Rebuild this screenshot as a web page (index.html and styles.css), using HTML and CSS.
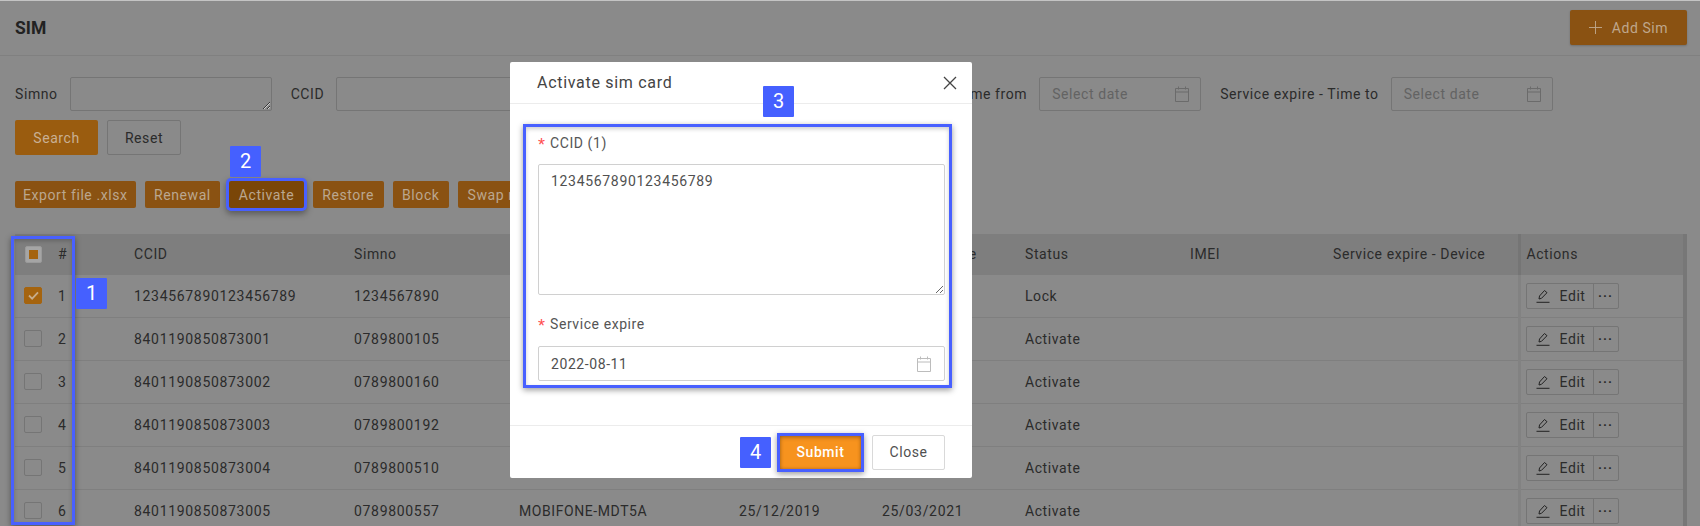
FILE: index.html
```html
<!DOCTYPE html>
<html lang="en">
<head>
<meta charset="utf-8">
<title>SIM</title>
<link rel="stylesheet" href="styles.css">
</head>
<body>
<div class="page">
  <header class="topbar">
    <h1 class="title">SIM</h1>
    <button class="btn btn-add"><svg class="ico-plus" viewBox="0 0 14 14"><path d="M7 0v14M0 7h14"/></svg>Add Sim</button>
  </header>

  <section class="filters">
    <div class="filter-row">
      <label class="f-label">Simno</label>
      <textarea class="f-area"></textarea>
      <label class="f-label f-next">CCID</label>
      <textarea class="f-area"></textarea>
      <span class="f-spacer"></span>
      <label class="f-label">Service expire - Time from</label>
      <div class="f-date"><span>Select date</span><svg class="ico-cal" viewBox="0 0 14 16"><path d="M.5 2.5h13v13H.5zM.5 6h13M3.5.5v3M10.500 .5v3"/></svg></div>
      <label class="f-label f-next">Service expire - Time to</label>
      <div class="f-date"><span>Select date</span><svg class="ico-cal" viewBox="0 0 14 16"><path d="M.5 2.5h13v13H.5zM.5 6h13M3.5.5v3M10.500 .5v3"/></svg></div>
    </div>
    <div class="search-row">
      <button class="btn btn-search">Search</button>
      <button class="btn btn-reset">Reset</button>
    </div>
  </section>

  <div class="toolbar">
    <button class="btn btn-act">Export file .xlsx</button>
    <button class="btn btn-act">Renewal</button>
    <button class="btn btn-act btn-focus">Activate</button>
    <button class="btn btn-act">Restore</button>
    <button class="btn btn-act">Block</button>
    <button class="btn btn-act">Swap number</button>
  </div>

  <div class="table-wrap">
    <table class="grid">
      <colgroup>
        <col class="c1"><col class="c2"><col class="c3"><col class="c4"><col class="c5"><col class="c6"><col class="c7"><col class="c8"><col class="c9"><col class="c10"><col class="c11">
      </colgroup>
      <thead>
        <tr>
          <th><span class="cb cb-some"><i></i></span></th><th>#</th><th>CCID</th><th>Simno</th><th>Package</th><th>Active date</th><th>Service expire</th><th>Status</th><th>IMEI</th><th>Service expire - Device</th><th class="act">Actions</th>
        </tr>
      </thead>
      <tbody>
        <tr>
          <td><span class="cb cb-on"><svg viewBox="0 0 12 10"><path d="M1 5l3.500 3.500L11 1.500"/></svg></span></td><td>1</td><td>1234567890123456789</td><td>1234567890</td><td></td><td></td><td></td><td>Lock</td><td></td><td></td>
          <td class="act"><div class="edit"><span class="edit-main"><svg class="ico-pen" viewBox="0 0 14 14"><path d="M3 10l.5-3L8.500 1.500l2.500 2.200-5.500 5.600zM.5 13.300h13"/></svg>Edit</span><span class="edit-more">···</span></div></td>
        </tr>
        <tr>
          <td><span class="cb"></span></td><td>2</td><td>8401190850873001</td><td>0789800105</td><td></td><td></td><td></td><td>Activate</td><td></td><td></td>
          <td class="act"><div class="edit"><span class="edit-main"><svg class="ico-pen" viewBox="0 0 14 14"><path d="M3 10l.5-3L8.500 1.500l2.500 2.200-5.500 5.600zM.5 13.300h13"/></svg>Edit</span><span class="edit-more">···</span></div></td>
        </tr>
        <tr>
          <td><span class="cb"></span></td><td>3</td><td>8401190850873002</td><td>0789800160</td><td></td><td></td><td></td><td>Activate</td><td></td><td></td>
          <td class="act"><div class="edit"><span class="edit-main"><svg class="ico-pen" viewBox="0 0 14 14"><path d="M3 10l.5-3L8.500 1.500l2.500 2.200-5.500 5.600zM.5 13.300h13"/></svg>Edit</span><span class="edit-more">···</span></div></td>
        </tr>
        <tr>
          <td><span class="cb"></span></td><td>4</td><td>8401190850873003</td><td>0789800192</td><td></td><td></td><td></td><td>Activate</td><td></td><td></td>
          <td class="act"><div class="edit"><span class="edit-main"><svg class="ico-pen" viewBox="0 0 14 14"><path d="M3 10l.5-3L8.500 1.500l2.500 2.200-5.500 5.600zM.5 13.300h13"/></svg>Edit</span><span class="edit-more">···</span></div></td>
        </tr>
        <tr>
          <td><span class="cb"></span></td><td>5</td><td>8401190850873004</td><td>0789800510</td><td></td><td></td><td></td><td>Activate</td><td></td><td></td>
          <td class="act"><div class="edit"><span class="edit-main"><svg class="ico-pen" viewBox="0 0 14 14"><path d="M3 10l.5-3L8.500 1.500l2.500 2.200-5.500 5.600zM.5 13.300h13"/></svg>Edit</span><span class="edit-more">···</span></div></td>
        </tr>
        <tr>
          <td><span class="cb"></span></td><td>6</td><td>8401190850873005</td><td>0789800557</td><td>MOBIFONE-MDT5A</td><td>25/12/2019</td><td>25/03/2021</td><td>Activate</td><td></td><td></td>
          <td class="act"><div class="edit"><span class="edit-main"><svg class="ico-pen" viewBox="0 0 14 14"><path d="M3 10l.5-3L8.500 1.500l2.500 2.200-5.500 5.600zM.5 13.300h13"/></svg>Edit</span><span class="edit-more">···</span></div></td>
        </tr>
      </tbody>
    </table>
  </div>

  <div class="modal">
    <div class="modal-head">
      <span class="modal-title">Activate sim card</span>
      <svg class="ico-x" viewBox="0 0 14 14"><path d="M1 1l12 12M13 1L1 13"/></svg>
    </div>
    <div class="modal-body">
      <label class="m-label"><span class="req">*</span>CCID (1)</label>
      <textarea class="m-area">1234567890123456789</textarea>
      <label class="m-label m-label-2"><span class="req">*</span>Service expire</label>
      <div class="m-date"><span>2022-08-11</span><svg class="ico-cal ico-cal-m" viewBox="0 0 14 16"><path d="M.5 2.500h13v13H.5zM.5 6h13M3.500 .5v3M10.500 .5v3"/></svg></div>
    </div>
    <div class="modal-foot">
      <button class="btn btn-submit">Submit</button>
      <button class="btn btn-close">Close</button>
    </div>
  </div>

  <div class="frame frame-1"></div>
  <div class="frame frame-3"></div>
  <div class="frame frame-4"></div>
  <div class="badge badge-1">1</div>
  <div class="badge badge-2">2</div>
  <div class="badge badge-3">3</div>
  <div class="badge badge-4">4</div>
</div>
</body>
</html>
```

FILE: styles.css
```css
* { box-sizing: border-box; }
html, body { margin: 0; padding: 0; }
body { font-family: Roboto, "Liberation Sans", sans-serif; font-size: 14px; letter-spacing: .58px; color: #2b2b2b; background: #8a8a8a; }
.page { position: relative; width: 1700px; height: 526px; overflow: hidden; background: #8a8a8a; border-top: 1px solid #c4c4c4; }

.topbar { display: flex; align-items: center; justify-content: space-between; height: 55px; padding: 0 13px 0 15px; border-bottom: 1px solid #808080; }
.title { margin: 0; font-size: 17.500px; font-weight: 700; letter-spacing: 0; color: #222; }

.btn { display: inline-flex; align-items: center; justify-content: center; font-family: inherit; font-size: 14px; letter-spacing: inherit; border: 0; border-radius: 2px; padding: 0; cursor: pointer; }
.btn-add { width: 117px; height: 35px; margin-top: -1px; background: #8a5212; color: #bfa78c; box-shadow: 0 1px 2px rgba(0,0,0,.2); }
.ico-plus { width: 13px; height: 13px; margin-right: 10px; fill: none; stroke: #bfa78c; stroke-width: 1; }

.filters { padding: 21px 0 0 15px; }
.filter-row { display: flex; align-items: center; height: 34px; }
.f-label { margin-right: 12px; color: #2b2b2b; white-space: nowrap; }
.f-next { margin-left: 19px; }
.f-area { width: 202px; height: 34px; min-height: 34px; background: transparent; border: 1px solid #757575; border-radius: 2px; margin: 0; outline: 0; }
.f-spacer { flex: 0 0 312px; }
.f-date { display: flex; align-items: center; justify-content: space-between; width: 162px; height: 34px; padding: 0 11px 0 12px; border: 1px solid #757575; border-radius: 2px; color: #636363; }
.ico-cal { width: 14px; height: 16px; fill: none; stroke: #6b6b6b; stroke-width: 1; }

.search-row { display: flex; gap: 9px; margin-top: 9px; }
.btn-search { width: 83px; height: 35px; background: #9a5c0f; color: #c9b094; }
.btn-reset { width: 74px; height: 35px; background: transparent; border: 1px solid #757575; color: #2b2b2b; }

.toolbar { display: flex; gap: 9px; padding: 26px 0 0 15px; }
.btn-act { height: 27px; padding: 0 9.500px; background: #8a5212; color: #bba78f; white-space: nowrap; }
.btn-act:first-child { padding: 0 8px; }
.btn-focus { box-shadow: 0 0 0 3px #4860ff, 0 3px 6px 3px rgba(0,0,0,.35); background: #7a4608; }

.table-wrap { margin: 26px 13px 0 15px; border-right: 4px solid #777; }
.grid { width: 100%; table-layout: fixed; border-collapse: collapse; }
.c1 { width: 34px; } .c2 { width: 76px; } .c3 { width: 220px; } .c4 { width: 165px; } .c5 { width: 220px; } .c6 { width: 143px; } .c7 { width: 143px; } .c8 { width: 165px; } .c9 { width: 143px; } .c10 { width: 195px; } .c11 { width: 164px; }
.grid th { height: 41px; padding: 0 9px 2px; background: #7e7e7e; font-weight: 400; text-align: left; color: #2b2b2b; }
.grid td { height: 43px; padding: 0 9px; border-bottom: 1px solid #7f7f7f; color: #2b2b2b; white-space: nowrap; }
.grid tbody tr:first-child td { height: 42px; }
.grid td:nth-child(3), .grid td:nth-child(4), .grid td:nth-child(6), .grid td:nth-child(7) { letter-spacing: .68px; }
.grid .act { border-left: 3px solid #757575; padding-left: 6px; }
.grid td.act { border-left-color: #828282; padding-left: 5px; }

.cb { display: block; width: 18px; height: 17px; border: 1px solid #757575; border-radius: 2px; }
.grid th .cb { display: flex; align-items: center; justify-content: center; margin: 2px 0 0 1px; width: 17px; background: #a5a5a5; border-color: #9a9a9a; }
.cb-some i { display: block; width: 9px; height: 9px; background: #a5640f; }
.cb-on { display: flex; align-items: center; justify-content: center; background: #a5640f; border-color: #a5640f; }
.cb-on svg { width: 11px; height: 9px; fill: none; stroke: #c7ad8c; stroke-width: 2; }

.edit { display: flex; width: 93px; height: 26px; border: 1px solid #757575; border-radius: 2px; }
.edit-main { display: flex; align-items: center; width: 67px; padding-left: 9px; border-right: 1px solid #757575; }
.edit-more { flex: 1; text-align: center; line-height: 24px; font-weight: 700; font-size: 13px; letter-spacing: 1px; }
.ico-pen { width: 14px; height: 14px; margin-right: 10px; fill: none; stroke: #222; stroke-width: 1; }

.modal { position: absolute; left: 510px; top: 61px; width: 462px; height: 416px; display: flex; flex-direction: column; background: #fff; border-radius: 2px; color: #505050; }
.modal-head { display: flex; align-items: center; justify-content: space-between; height: 42px; padding: 0 15px 0 27px; border-bottom: 1px solid #ececec; }
.modal-title { font-size: 16px; letter-spacing: .7px; color: #444; }
.ico-x { width: 14px; height: 14px; fill: none; stroke: #444; stroke-width: 1.300; }
.modal-body { flex: 1; padding: 30px 27px 0 28px; }
.m-label { display: flex; align-items: center; height: 18px; line-height: 18px; color: #555; }
.req { display: inline-block; width: 12px; height: 18px; line-height: 23px; font-size: 18px; color: #ff4d4f; font-family: "Liberation Sans", sans-serif; letter-spacing: 0; }
.m-area { display: block; width: 100%; height: 131px; margin: 12px 0 0; padding: 5px 12px; border: 1px solid #d0d0d0; border-radius: 2px; font-family: inherit; font-size: 14px; letter-spacing: .68px; line-height: 22px; color: #505050; outline: 0; }
.m-label-2 { margin-top: 20px; }
.m-date { display: flex; align-items: center; justify-content: space-between; height: 35px; margin-top: 13px; padding: 0 13px 0 12px; border: 1px solid #d0d0d0; border-radius: 2px; color: #505050; }
.ico-cal-m { stroke: #bcbcbc; }
.modal-foot { display: flex; align-items: center; justify-content: flex-end; gap: 10px; height: 53px; padding: 0 27px 0 0; border-top: 1px solid #ececec; }
.btn-submit { width: 83px; height: 35px; background: #f7931e; color: #fff; font-weight: 500; box-shadow: inset 0 0 4px rgba(0,0,0,.35); }
.btn-close { width: 73px; height: 35px; background: #fff; border: 1px solid #d9d9d9; color: #505050; }

.frame { position: absolute; border: 3px solid #4860ff; box-shadow: 0 2px 6px rgba(0,0,0,.4), inset 0 2px 4px rgba(0,0,0,.2); }
.frame-1 { left: 11px; top: 235px; width: 64px; height: 289px; }
.frame-3 { left: 523px; top: 123px; width: 429px; height: 264px; }
.frame-4 { left: 777px; top: 432px; width: 87px; height: 39px; }
.badge { position: absolute; width: 31px; height: 31px; background: #4560ff; border-radius: 1px; color: #fff; font-size: 20px; letter-spacing: 0; line-height: 31px; text-align: center; }
.badge-1 { left: 76px; top: 277px; }
.badge-2 { left: 230px; top: 145px; }
.badge-3 { left: 763px; top: 85px; }
.badge-4 { left: 740px; top: 436px; }
```
